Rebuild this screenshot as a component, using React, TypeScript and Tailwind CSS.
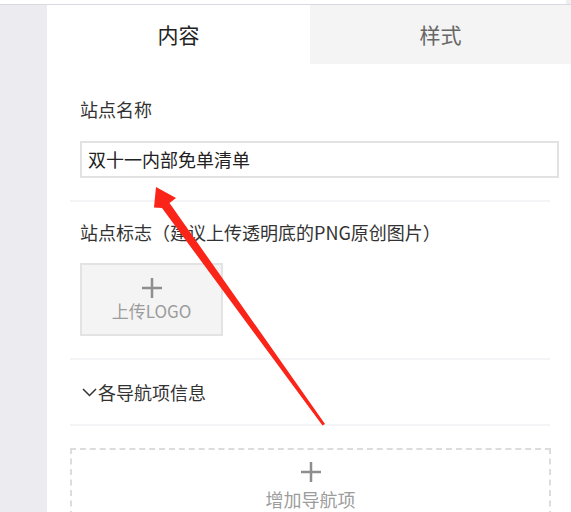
import React from "react";

const font = { fontFamily: '"Noto Sans CJK SC", "Noto Sans", sans-serif' };

function PlusIcon() {
  return (
    <svg width="22" height="20" viewBox="0 0 22 20" className="block">
      <path d="M11 0V20M1 10H21" stroke="#8e8e8e" strokeWidth="2.5" fill="none" />
    </svg>
  );
}

function Divider() {
  return <div className="h-[2px] bg-[#f4f4f6]" />;
}

export default function App() {
  return (
    <div
      className="relative w-[571px] h-[512px] overflow-hidden bg-white text-[#333]"
      style={font}
    >
      {/* top strip */}
      <div className="flex h-[5px] border-b border-[#d9d9e1]">
        <div className="flex-1 bg-white" />
        <div className="w-[5px] bg-[#efeff2]" />
      </div>

      <div className="flex h-[507px]">
        <div className="w-[47px] shrink-0 bg-[#ebebf0]" />

        <div className="flex-1 flex flex-col bg-white">
          {/* tabs */}
          <div className="flex h-[59px] shrink-0">
            <div className="w-[263px] flex items-center justify-center text-[21px] text-[#222] bg-white">
              内容
            </div>
            <div className="flex-1 flex items-center justify-center text-[21px] text-[#666] bg-[#f4f4f4]">
              样式
            </div>
          </div>

          <div className="pl-[23px] pr-[21px]">
            {/* site name */}
            <div className="px-[10px] pt-[33px] pb-[22px]">
              <div className="text-[18px] leading-[24px]">站点名称</div>
              <div className="mt-[20px] -mr-[19px] h-[37px] border-2 border-[#e2e2e2] flex items-center px-[6px] text-[18px] text-[#222]">
                双十一内部免单清单
              </div>
            </div>
            <Divider />

            {/* logo */}
            <div className="px-[10px] pt-[18px] pb-[22px]">
              <div className="text-[18px] leading-[24px]">
                站点标志（建议上传透明底的PNG原创图片）
              </div>
              <div className="mt-[19px] w-[143px] h-[73px] border-2 border-[#e3e3e3] bg-[#f4f4f4] flex flex-col items-center justify-center">
                <PlusIcon />
                <div className="mt-[3px] text-[17px] leading-[20px] text-[#9c9c9c]">上传LOGO</div>
              </div>
            </div>
            <Divider />

            {/* nav section */}
            <div className="px-[12px] pt-[20px] pb-[20px] flex items-center h-[64px]">
              <svg width="15" height="9" viewBox="0 0 15 9" className="mr-[1px]">
                <path d="M1 1L7.5 7.5L14 1" stroke="#333" strokeWidth="1.5" fill="none" />
              </svg>
              <span className="text-[18px] leading-[24px]">各导航项信息</span>
            </div>
            <Divider />

            <div className="mt-[22px] -mr-[1px] h-[90px] border-2 border-dashed border-[#dcdcdc] flex flex-col items-center pt-[12px]">
              <PlusIcon />
              <div className="mt-[7px] text-[18px] leading-[20px] text-[#9c9c9c]">增加导航项</div>
            </div>
          </div>
        </div>
      </div>

      {/* annotation arrow */}
      <svg
        className="absolute left-0 top-0 pointer-events-none"
        width="571"
        height="512"
        viewBox="0 0 571 512"
      >
        <polygon
          points="156,187 176,198 169.5,203 325,424 322.5,425.5 162,208 154,207.5"
          fill="#fa2418"
        />
      </svg>
    </div>
  );
}
